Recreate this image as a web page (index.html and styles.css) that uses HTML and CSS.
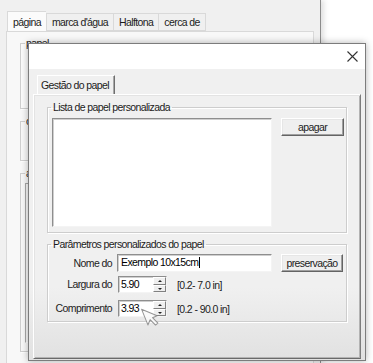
FILE: index.html
```html
<!DOCTYPE html>
<html lang="pt">
<head>
  <meta charset="UTF-8" />
  <title>Gestão do papel</title>
  <link rel="stylesheet" href="styles.css">
</head>
<body>
  <div class="bgwin">
    <div class="tabs">
      <span class="tab active">página</span>
      <span class="tab">marca d'água</span>
      <span class="tab">Halftona</span>
      <span class="tab">cerca de</span>
    </div>
    <div class="tabpanel">
      <fieldset class="grp grp-papel"><legend>papel</legend></fieldset>
      <fieldset class="grp grp-o"><legend>o</legend></fieldset>
      <fieldset class="grp grp-a"><legend>a</legend><div class="sunken"></div></fieldset>
    </div>
  </div>

  <div class="dialog">
    <div class="titlebar">
      <svg class="close" width="11" height="11" viewBox="0 0 11 11">
        <path d="M0.5 0.5 L10.5 10.5 M10.5 0.5 L0.5 10.5" stroke="#333" stroke-width="1.1" fill="none"/>
      </svg>
    </div>
    <div class="dlg-body">
      <div class="dlg-tab">Gestão do papel</div>
      <div class="dlg-panel">
        <fieldset class="box box-list">
          <legend>Lista de papel personalizada</legend>
          <div class="list-row">
            <div class="listbox"></div>
            <button class="btn">apagar</button>
          </div>
        </fieldset>
        <fieldset class="box box-params">
          <legend>Parâmetros personalizados do papel</legend>
          <div class="params">
            <label class="lbl">Nome do</label>
            <div class="field field-name">Exemplo 10x15cm<span class="caret"></span></div>
            <button class="btn btn-save">preservação</button>

            <label class="lbl">Largura do</label>
            <div class="spin-row">
              <div class="field spin">
                <span class="spin-val">5.90</span>
                <span class="spin-btns"><span class="up"></span><span class="down"></span></span>
              </div>
              <span class="range">[0.2- 7.0 in]</span>
            </div>

            <label class="lbl">Comprimento</label>
            <div class="spin-row">
              <div class="field spin">
                <span class="spin-val">3.93</span>
                <span class="spin-btns"><span class="up"></span><span class="down"></span></span>
              </div>
              <span class="range">[0.2 - 90.0 in]</span>
            </div>
          </div>
        </fieldset>
      </div>
    </div>
  </div>

  <svg class="cursor" width="22" height="26" viewBox="0 0 22 26">
    <path d="M2 2 L2 19 L6 15 L9 22 L12 21 L9 14 L14 14 Z" fill="#fafafa" stroke="#8a8a8a" stroke-width="1" stroke-linejoin="round"/>
  </svg>
</body>
</html>
```

FILE: styles.css
```css
* { box-sizing: border-box; }
body {
  margin: 0;
  width: 373px;
  height: 363px;
  overflow: hidden;
  background: #fff;
  position: relative;
  font-family: "Liberation Sans", Arial, sans-serif;
  font-size: 10.5px;
  letter-spacing: -0.6px;
  color: #1c1c1c;
}

/* window behind */
.bgwin {
  width: 321px;
  height: 363px;
  background: #f0f0f0;
  border-right: 1px solid #8c8c8c;
  box-shadow: 3px 0 5px rgba(0,0,0,0.12);
  padding: 11px 0 0 6px;
}
.tabs { display: flex; align-items: flex-end; height: 20px; padding-left: 1px; }
.tab {
  height: 18px;
  line-height: 17px;
  padding: 0 5px;
  border: 1px solid #d9d9d9;
  border-right: none;
  background: #f0f0f0;
}
.tab:last-child { border-right: 1px solid #d9d9d9; }
.tab.active {
  height: 21px;
  line-height: 20px;
  padding: 0 5px;
  background: #fbfbfb;
  margin-bottom: -1px;
  position: relative;
  z-index: 1;
}
.tabpanel {
  width: 308px;
  height: 340px;
  background: #f8f8f8;
  border: 1px solid #d9d9d9;
  padding: 5px 0 0 13px;
}
.grp {
  margin: 0 0 6px;
  padding: 0;
  width: 280px;
  border: 1px solid #cfcfcf;
  box-shadow: 1px 1px 0 #fff;
}
.grp legend { padding: 0 1px; margin-left: 4px; line-height: 12px; }
.grp-papel { height: 72px; background: #fbfbfb; }
.grp-o { height: 46px; }
.grp-a { height: 185px; }
.grp-a .sunken {
  margin: 4px 0 0 4px;
  height: 160px;
  border: 1px solid #a8a8a8;
  border-right-color: #fff;
  border-bottom-color: #fff;
}

/* foreground dialog */
.dialog {
  position: absolute;
  left: 28px;
  top: 43px;
  width: 338px;
  height: 318px;
  border: 1px solid #7c7c7c;
  background: #f0f0f0;
  box-shadow: 0 0 7px rgba(0,0,0,0.3);
}
.titlebar {
  height: 25px;
  background: #fff;
  display: flex;
  justify-content: flex-end;
  align-items: center;
  padding-right: 7px;
}
.dlg-body {
  height: 291px;
  padding: 6px 0 0 4px;
  background: linear-gradient(#f0f0f0 75%, #e1e1e1);
}
.dlg-tab {
  display: inline-block;
  margin-left: 4px;
  height: 19px;
  line-height: 18px;
  padding: 0 5px 0 3px;
  border: 1px solid #fff;
  border-right: 1px solid #6f6f6f;
  border-bottom: none;
  box-shadow: inset -1px 0 0 #a8a8a8;
  vertical-align: top;
}
.dlg-panel {
  width: 328px;
  height: 265px;
  border: 1px solid;
  border-color: #fff #7d7d7d #6a6a6a #fff;
  box-shadow: inset 1px 1px 0 #e3e3e3, inset -1px -1px 0 #b3b3b3;
  padding: 6px 0 0 13px;
}
.box {
  margin: 0;
  padding: 0 0 5px;
  width: 300px;
  border: 1px solid #cdcdcd;
  box-shadow: inset 1px 1px 0 #fff, 1px 1px 0 #fff;
}
.box legend { padding: 0 2px; margin-left: 3px; line-height: 12px; }
.list-row { display: flex; align-items: flex-start; gap: 9px; padding: 5px 0 0 4px; }
.listbox {
  width: 220px;
  height: 109px;
  background: #fff;
  border: 1px solid;
  border-color: #8e8e8e #f4f4f4 #f4f4f4 #8e8e8e;
  box-shadow: inset 1px 1px 0 #cfcfcf;
}
.btn {
  width: 63px;
  height: 18px;
  padding: 0;
  font: inherit;
  letter-spacing: inherit;
  color: #1c1c1c;
  background: #efefef;
  border: 1px solid;
  border-color: #fff #646464 #646464 #fff;
  box-shadow: inset -1px -1px 0 #a0a0a0, inset 1px 1px 0 #e6e6e6;
}
.box-params { margin-top: 5px; padding: 4px 0 4px; }
.params {
  display: grid;
  grid-template-columns: 64px 155px 62px;
  grid-template-rows: 18px 21px 24px;
  column-gap: 5px;
  align-items: end;
}
.params .btn-save { margin-left: 4px; width: 62px; }
.lbl { text-align: right; line-height: 17px; }
.field {
  height: 100%;
  background: #fff;
  border: 1px solid;
  border-color: #8e8e8e #f4f4f4 #f4f4f4 #8e8e8e;
  box-shadow: inset 1px 1px 0 #cfcfcf;
  line-height: 15px;
  padding-left: 3px;
  color: #000;
}
.caret {
  display: inline-block;
  width: 1px;
  height: 11px;
  background: #000;
  margin-left: 1px;
  vertical-align: -2px;
}
.spin-row { display: flex; align-items: center; height: 17px; gap: 10px; padding-left: 1px; grid-column: 2 / 4; }
.spin {
  width: 49px;
  display: flex;
  justify-content: space-between;
  padding: 0 0 0 2px;
}
.spin-btns {
  width: 13px;
  display: flex;
  flex-direction: column;
}
.spin-btns span {
  flex: 1;
  background: #efefef;
  border: 1px solid;
  border-color: #fff #808080 #808080 #fff;
  position: relative;
}
.spin-btns span::after {
  content: "";
  position: absolute;
  left: 4px;
  border: 2px solid transparent;
}
.spin-btns .up::after { border-bottom-color: #222; top: 0; }
.spin-btns .down::after { border-top-color: #222; top: 2px; }

.cursor {
  position: absolute;
  left: 143px;
  top: 303px;
  transform: rotate(-22deg);
  opacity: 0.9;
}
```
